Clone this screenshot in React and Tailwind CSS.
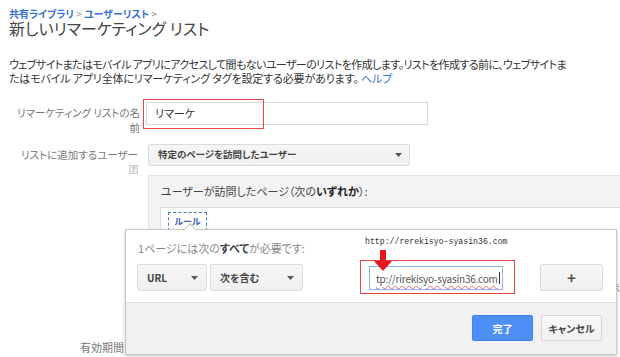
import React from "react";

function Arrow() {
  return (
    <svg width="7" height="4" viewBox="0 0 7 4" className="shrink-0">
      <path d="M0 0 L7 0 L3.5 4 Z" fill="#555" />
    </svg>
  );
}

function Dropdown({ label, className = "" }) {
  return (
    <div
      className={`flex items-center justify-between rounded-[2px] border border-[#dcdcdc] bg-gradient-to-b from-[#f6f6f6] to-[#f0f0f0] text-[#444] font-bold ${className}`}
    >
      {label}
    </div>
  );
}

export default function App() {
  return (
    <div className="relative w-[620px] h-[357px] overflow-hidden bg-white text-[#333] font-['Noto_Sans_CJK_JP','Noto_Sans',sans-serif] [font-feature-settings:'palt']">
      {/* header */}
      <div className="pl-[9px] pt-[8px]">
        <div className="text-[10px] leading-[11px] text-[#3a6fd8] font-bold whitespace-nowrap">
          共有ライブラリ <span className="text-[#888] font-normal">&gt;</span> ユーザーリスト <span className="text-[#888] font-normal">&gt;</span>
        </div>
        <h1 className="mt-[1px] text-[16px] leading-[16px] text-[#444] whitespace-nowrap">新しいリマーケティング リスト</h1>
        <div className="mt-[21px] whitespace-nowrap text-[11px] leading-[14px] text-[#333]">
          <p className="tracking-[-0.6px]">
            ウェブサイトまたはモバイル アプリにアクセスして間もないユーザーのリストを作成します。リストを作成する前に、ウェブサイトま
          </p>
          <p className="tracking-[-0.15px]">
            たはモバイル アプリ全体にリマーケティング タグを設定する必要があります。 <span className="text-[#3a6fd8]">ヘルプ</span>
          </p>
        </div>
      </div>

      {/* row 1 */}
      <div className="mt-[17px] flex items-start">
        <div className="w-[140px] pt-[3px] text-right text-[10.5px] leading-[15px] text-[#777] whitespace-nowrap">
          リマーケティング リストの名
          <br />
          前
        </div>
        <div className="relative ml-[6px] h-[23px] w-[282px] border border-[#d9d9d9] bg-white">
          <div className="absolute left-[-4px] top-[-4px] h-[30px] w-[121px] border border-[#e8464a]" />
          <div className="pl-[8px] text-[11px] leading-[21px] text-[#333]">リマーケ</div>
        </div>
      </div>

      {/* row 2 */}
      <div className="mt-[9px] flex items-start">
        <div className="flex w-[138px] flex-col items-end pt-[4px]">
          <div className="text-[10.5px] leading-[14px] text-[#777] whitespace-nowrap">リストに追加するユーザー</div>
          <div className="mt-[3px] flex h-[9px] w-[9px] items-center justify-center border border-[#ccc] bg-[#eee] text-[7px] leading-none text-[#888]">
            ?
          </div>
        </div>
        <Dropdown
          label={
            <>
              <span className="text-[9.5px] leading-none whitespace-nowrap">特定のページを訪問したユーザー</span>
              <Arrow />
            </>
          }
          className="ml-[10px] h-[22px] w-[262px] pl-[9px] pr-[7px]"
        />
      </div>

      {/* panel */}
      <div className="ml-[148px] mt-[1px] border-l border-t border-[#e5e5e5] bg-[#f3f3f3]">
        <div className="flex h-[31px] items-center pl-[12px] text-[11px] text-[#444] whitespace-nowrap">
          ユーザーが訪問したページ（次の<span className="font-bold text-[#222]">いずれか</span>）:
        </div>
        <div className="ml-[11px] flex h-[130px] justify-between border-l border-t border-[#dedede] bg-white">
          <div className="pl-[7px] pt-[4px]">
            <div className="flex h-[19px] w-[39px] items-center justify-center border border-dashed border-[#4a78d0] text-[9px] font-bold text-[#3a5fb0]">
              ルール
            </div>
          </div>
          <div className="pt-[72px] text-[10px] text-[#888]">示</div>
        </div>
      </div>

      {/* row 有効期間 */}
      <div className="mt-[3px] w-[124px] text-right text-[11px] leading-[14px] text-[#777]">有効期間</div>

      {/* popup */}
      <div className="absolute left-[125px] top-[229px] w-[492px] h-[126px] border border-[#c6c6c6] bg-white shadow-[0_2px_4px_rgba(0,0,0,0.2)]">
        {/* notch */}
        <div className="absolute left-[60px] top-[-5px] h-[8px] w-[8px] rotate-45 border-l border-t border-[#c6c6c6] bg-white" />
        <div className="relative h-[72px]">
          <div className="pl-[12px] pt-[11px] text-[11px] leading-[14px] text-[#888] whitespace-nowrap">
            1ページには次の<span className="font-bold text-[#444]">すべて</span>が必要です:
          </div>
          <div className="mt-[9px] flex items-start pl-[11px]">
            <Dropdown
              label={
                <>
                  <span className="text-[10px] leading-none">URL</span>
                  <Arrow />
                </>
              }
              className="h-[27px] w-[70px] pl-[9px] pr-[8px]"
            />
            <Dropdown
              label={
                <>
                  <span className="text-[10px] leading-none whitespace-nowrap">次を含む</span>
                  <Arrow />
                </>
              }
              className="ml-[3px] h-[27px] w-[93px] pl-[9px] pr-[8px]"
            />
            <div className="ml-[66px] mt-[2px] flex h-[24px] w-[134px] items-center overflow-hidden whitespace-nowrap border border-[#8fb3f0] bg-white pl-[6px] text-[10px] tracking-[-0.2px] text-[#555]">
              <span className="underline decoration-wavy decoration-[#e46a6a] decoration-1 underline-offset-2">
                tp://rirekisyo-syasin36.com
              </span>
              <span className="ml-[1px] h-[12px] w-[1px] shrink-0 bg-[#333]" />
            </div>
            <div className="ml-[37px] flex h-[27px] w-[63px] items-center justify-center rounded-[2px] border border-[#dcdcdc] bg-gradient-to-b from-[#f6f6f6] to-[#f0f0f0] text-[15px] font-bold leading-none text-[#555]">
              +
            </div>
          </div>

          {/* annotations */}
          <div className="absolute left-[239px] top-[6px] whitespace-nowrap font-['Liberation_Mono',monospace] text-[8.2px] leading-[12px] text-[#333]">
            http://rerekisyo-syasin36.com
          </div>
          <div className="absolute left-[234px] top-[30px] h-[34px] w-[155px] border border-[#e8464a]" />
          <svg className="absolute left-[247px] top-[20px]" width="20" height="22" viewBox="0 0 20 22">
            <rect x="7" y="0" width="6" height="12" fill="#e8161b" />
            <path d="M1 11 L19 11 L10 21 Z" fill="#e8161b" />
          </svg>
        </div>
        {/* footer */}
        <div className="flex h-[52px] justify-end gap-[8px] border-t border-[#e3e3e3] bg-[#f1f1f1] pr-[14px] pt-[12px]">
          <div className="flex h-[26px] w-[61px] items-center justify-center rounded-[2px] border border-[#3f83f0] bg-[#4d8ff5] text-[10px] font-bold text-white">
            完了
          </div>
          <div className="flex h-[26px] w-[61px] items-center justify-center rounded-[2px] border border-[#d6d6d6] bg-gradient-to-b from-[#f8f8f8] to-[#f1f1f1] text-[10px] font-bold text-[#444]">
            キャンセル
          </div>
        </div>
      </div>
    </div>
  );
}
